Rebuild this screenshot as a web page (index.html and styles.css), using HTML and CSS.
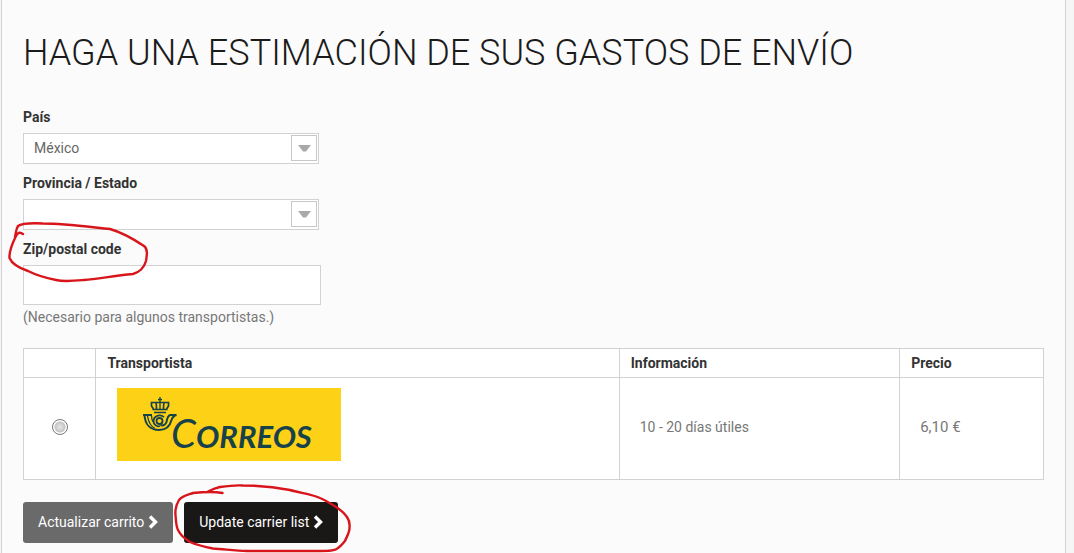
FILE: index.html
```
<!DOCTYPE html>
<html lang="es">
<head>
    <meta charset="UTF-8">
    <meta name="viewport" content="width=device-width, initial-scale=1.0">
    <title>Gastos de envío</title>
    <link rel="stylesheet" href="styles.css">
</head>
<body>
    <form class="panel">
        <h1 class="title">Haga una estimación de sus gastos de envío</h1>
        <div class="field">
            <label for="country">País</label>
            <div class="select">
                <select id="country">
                    <option>México</option>
                </select>
                <span class="arrow"><svg width="13" height="7" viewBox="0 0 13 7"><path d="M0 0h13L8 6.5H5z" fill="#a9a9a9"/></svg></span>
            </div>
        </div>
        <div class="field">
            <label for="state">Provincia / Estado</label>
            <div class="select">
                <select id="state">
                    <option></option>
                </select>
                <span class="arrow"><svg width="13" height="7" viewBox="0 0 13 7"><path d="M0 0h13L8 6.5H5z" fill="#a9a9a9"/></svg></span>
            </div>
        </div>
        <div class="field marked">
            <label for="zip">Zip/postal code</label>
            <input class="text" type="text" id="zip">
            <span class="hint">(Necesario para algunos transportistas.)</span>
            <svg class="mark mark-zip" width="144" height="66" viewBox="8 220 144 66">
                <path d="M23 234C20 232 18 232 16 236C13 242 9 250 9.500 258C12 264 19 268 28 271C36 275 46 278 56 280C64 282 73 281 84 280C98 279 112 276 133 274C140 272 144 268 146 261C147 255 148 249 144 246C135 240 124 233 110 229C90 227 65 223.500 43 223.500C32 223 22 223 18 226C16 229 16 232 15 237"/>
            </svg>
        </div>

        <table class="carriers">
            <thead>
                <tr>
                    <th class="col-pick"></th>
                    <th class="col-carrier">Transportista</th>
                    <th class="col-info">Información</th>
                    <th class="col-price">Precio</th>
                </tr>
            </thead>
            <tbody>
                <tr>
                    <td class="pick"><input type="radio" name="carrier" aria-label="Correos"></td>
                    <td class="carrier">
                        <svg class="logo" width="224" height="73" viewBox="0 0 224 73">
                            <rect width="224" height="73" fill="#fdd116"/>
                            <g fill="none" stroke="#17424a">
                                <!-- crown -->
                                <path d="M43 9v12M41 11.500h4" stroke-width="1.300"/>
                                <path d="M36.500 21L34.500 18V14.500H38.500C39.500 15 39.500 17 39.500 21M49.500 21L51.500 18V14.500H47.500C46.500 15 46.500 17 46.500 21M38.500 14.500H47.500" stroke-width="1.700"/>
                                <path d="M35.500 21.500h15M37 24.500h12" stroke-width="1.700"/>
                                <!-- horn -->
                                <path d="M26 27h9M27.500 27C28 36 33 42 42 42C50 42 53 38 54.500 32C55.500 29 57 27.500 59.500 27H53C50.500 28 50 31 49.500 34C48.500 37 46 38 43.500 37" stroke-width="2"/>
                                <path d="M30.500 28C31.500 34 34 38.500 38 40.500M34.500 27.500C34.500 30 35 32 36 34" stroke-width="1.300"/>
                                <path d="M47 29C42 25.500 36.500 28.500 36.500 33C36.500 37 40 39 43 38" stroke-width="1.800"/>
                                <circle cx="42.500" cy="33" r="3" stroke-width="1.800"/>
                            </g>
                            <text class="brand" x="54" y="60"><tspan class="brand-big">C</tspan>ORREOS</text>
                        </svg>
                    </td>
                    <td class="info">10 - 20 días útiles</td>
                    <td class="price">6,10 €</td>
                </tr>
            </tbody>
        </table>

        <div class="actions">
            <button class="btn btn-gray" type="button">Actualizar carrito
                <svg width="10" height="14" viewBox="0 0 10 14"><path d="M2 1.500L7.500 7L2 12.500"/></svg>
            </button>
            <div class="marked">
                <button class="btn btn-black" type="button">Update carrier list
                    <svg width="10" height="14" viewBox="0 0 10 14"><path d="M2 1.500L7.500 7L2 12.500"/></svg>
                </button>
                <svg class="mark mark-update" width="182" height="70" viewBox="172 483 182 70">
                    <path d="M222.500 493C212 491 202 492 193 493C187 495 182 496 179 500C176 505 175 510 175.500 515C176 521 176 526 178 530C181 536 185 539 190 542C197 545 205 547 213 548.500C224 549 235 551 247 551H320C328 551 335 551 338 548C342 545 343 543 345 541C347 536 350 532 349.500 527C350 523 349 520 347 517C343 511 338 508 333 505C328 502 325 500 320 498C311 494 300 493 290 490C275 487 259 485.500 243 485.500C235 485 227 486 220 487C215 488 211 490 208 491.500"/>
                </svg>
            </div>
        </div>
    </form>
</body>
</html>
```
FILE: styles.css
```
*{
    box-sizing: border-box;
}
body{
    margin: 0;
    background: #f5f5f5;
    font-family: Roboto, "Liberation Sans", sans-serif;
    font-size: 14px;
    line-height: 20px;
    color: #777;
}
.panel{
    min-height: 100vh;
    margin: 0 8px 0 1px;
    padding: 31px 21px 8px;
    background: #fbfbfb;
    border: solid #d2d2d2;
    border-width: 0 1px;
}
.title{
    margin: 0 0 32px;
    font-size: 36px;
    line-height: 44px;
    font-weight: 300;
    text-transform: uppercase;
    color: #1c1b1b;
}
.field{
    width: 298px;
    margin-bottom: 9px;
}
.field label{
    display: block;
    margin-bottom: 6px;
    font-weight: 700;
    color: #333;
}
.select{
    position: relative;
    width: 296px;
}
.select select{
    display: block;
    appearance: none;
    width: 100%;
    height: 31px;
    padding: 0 36px 2px 10px;
    background: #fff;
    border: 1px solid #d2d2d2;
    border-radius: 0;
    font: inherit;
    color: #666;
}
.arrow{
    position: absolute;
    top: 2px;
    right: 2px;
    display: flex;
    align-items: center;
    justify-content: center;
    width: 26px;
    height: 26px;
    background: #fff;
    border: 1px solid #c8c8c8;
    pointer-events: none;
}
.text{
    display: block;
    width: 100%;
    height: 40px;
    margin-bottom: 2px;
    padding: 0 10px;
    background: #fff;
    border: 1px solid #d2d2d2;
    font: inherit;
    color: #666;
}
.hint{
    display: block;
}
/* hand drawn circles */
.marked{
    position: relative;
}
.mark{
    position: absolute;
    fill: none;
    stroke: #d8151b;
    stroke-width: 2.4;
    stroke-linecap: round;
    pointer-events: none;
}
.mark-zip{
    left: -15px;
    top: -19px;
}
.mark-update{
    left: -12px;
    top: -19px;
}
.carriers{
    width: 100%;
    margin: 21px 0 22px;
    border-collapse: collapse;
    table-layout: fixed;
    background: #fff;
}
.carriers th,
.carriers td{
    border: 1px solid #d2d2d2;
    text-align: left;
}
.carriers th{
    height: 29px;
    padding: 4px 11px;
    font-weight: 700;
    color: #333;
}
.carriers td{
    padding: 0 20px 4px;
}
.col-pick{
    width: 7.1%;
}
.col-info{
    width: 27.5%;
}
.col-price{
    width: 14.1%;
}
.carriers .pick{
    padding: 0 0 4px;
    text-align: center;
}
.pick input{
    appearance: none;
    display: block;
    width: 16px;
    height: 16px;
    margin: 0 auto;
    border: 1px solid #777;
    border-radius: 50%;
    background: radial-gradient(circle, #e8e8e8 0, #c4c4c4 5px, #fff 6px);
}
.carriers .carrier{
    padding: 10px 21px 18px;
}
.logo{
    display: block;
}
.brand{
    font-family: Lato, sans-serif;
    font-size: 31px;
    font-style: italic;
    font-weight: 700;
    fill: #17424a;
}
.brand-big{
    font-size: 40px;
    font-weight: 400;
}
.carriers .price{
    font-size: 15px;
}
.actions{
    display: flex;
    gap: 11px;
}
.btn{
    display: flex;
    align-items: center;
    gap: 4px;
    height: 41px;
    padding: 0 15px 1px;
    border: 0;
    border-radius: 3px;
    font: inherit;
    color: #fff;
    cursor: pointer;
}
.btn svg{
    fill: none;
    stroke: #fff;
    stroke-width: 3.4;
}
.btn-gray{
    background: #6a6a6a;
}
.btn-black{
    background: #1a1817;
}
```
